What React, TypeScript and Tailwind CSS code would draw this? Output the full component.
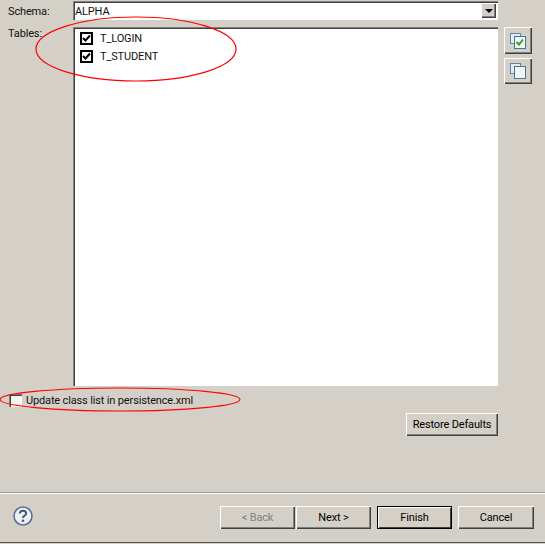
import type { ReactNode } from 'react'

const raised = 'shadow-[inset_1px_1px_0_#ffffff,inset_-1px_-1px_0_#404040,inset_-2px_-2px_0_#808080]'
const sunken = 'shadow-[inset_1px_1px_0_#808080,inset_2px_2px_0_#404040,inset_-1px_-1px_0_#ffffff]'

function Check() {
  return (
    <span className="flex h-[13px] w-[13px] items-center justify-center border-2 border-black bg-white">
      <svg width="9" height="9" viewBox="0 0 9 9">
        <path d="M1 4 L3.5 6.5 L8 1.5" fill="none" stroke="#000" strokeWidth="2" />
      </svg>
    </span>
  )
}

function WizardButton({ children, disabled, primary, className = '' }: { children: ReactNode; disabled?: boolean; primary?: boolean; className?: string }) {
  return (
    <button
      className={`flex h-[23px] items-center justify-center bg-[#d4d0c8] pt-[2px] ${primary ? 'border border-black shadow-[inset_1px_1px_0_#ffffff,inset_-1px_-1px_0_#404040]' : raised} ${disabled ? 'text-[#808080]' : 'text-black'} ${className}`}
    >
      {children}
    </button>
  )
}

function SquaresIcon({ checked }: { checked?: boolean }) {
  return (
    <svg width="16" height="16" viewBox="0 0 16 16">
      <rect x="0.5" y="0.5" width="10" height="10" fill="#e4ecf2" stroke="#5b87ab" />
      <rect x="4.5" y="3.5" width="11" height="12" fill="#f4f4f0" stroke="#3f77a3" />
      {checked && <path d="M6.5 9 L9 11.5 L13 6.5" fill="none" stroke="#2aa52a" strokeWidth="2" />}
    </svg>
  )
}

export default function App() {
  return (
    <div className="relative flex h-[544px] w-[545px] flex-col overflow-hidden bg-[#d4d0c8] font-['Roboto',sans-serif] text-[11px] tracking-[-0.15px] text-[#111111]">
      {/* Schema */}
      <div className="flex pt-px pl-2">
        <div className="w-[65px] pt-[4px] leading-[14px]">Schema:</div>
        <div className={`flex h-[19px] w-[425px] items-center justify-between bg-white pl-[2px] pr-[2px] ${sunken}`}>
          <span className="pt-[3px]">ALPHA</span>
          <span className={`flex h-[15px] w-[15px] items-center justify-center bg-[#d4d0c8] ${raised}`}>
            <span className="h-0 w-0 border-x-[4px] border-t-[4px] border-x-transparent border-t-black" />
          </span>
        </div>
      </div>

      {/* Tables */}
      <div className="mt-[7px] flex pl-2">
        <div className="w-[65px] leading-[14px]">Tables:</div>
        <div className={`flex h-[359px] w-[425px] flex-col gap-[5px] bg-white pt-[5px] pl-[7px] ${sunken}`}>
          <label className="flex h-[13px] items-center gap-[7px]"><Check /><span className="pt-[2px]">T_LOGIN</span></label>
          <label className="flex h-[13px] items-center gap-[7px]"><Check /><span className="pt-[2px]">T_STUDENT</span></label>
        </div>
        <div className="ml-[6px] flex flex-col gap-[4px]">
          <button className={`flex h-[27px] w-[28px] items-center justify-center ${raised}`}><SquaresIcon checked /></button>
          <button className={`flex h-[26px] w-[28px] items-center justify-center ${raised}`}><SquaresIcon /></button>
        </div>
      </div>

      {/* Update class list */}
      <label className="mt-[7px] flex h-[14px] items-center pl-[9px]">
        <span className="h-[13px] w-[13px] bg-[#f4f3ef] shadow-[inset_1px_1px_0_#808080,inset_2px_2px_0_#404040,inset_-1px_-1px_0_#ffffff]" />
        <span className="ml-1 pt-[2px]">Update class list in persistence.xml</span>
      </label>

      <div className="mt-[6px] flex justify-end pr-[47px]">
        <WizardButton className="w-[92px]">Restore Defaults</WizardButton>
      </div>

      {/* Footer */}
      <div className="mt-[56px] h-[2px] border-t border-b border-t-[#9a9892] border-b-white" />
      <div className="flex flex-1 items-start pt-[12px] pr-[11px] pl-[13px]">
        <svg width="20" height="20" viewBox="0 0 20 20">
          <circle cx="10" cy="10" r="9" fill="#eef1f6" stroke="#5a6f96" strokeWidth="1.6" />
          <path d="M6.8 7.6 C6.8 3.8 13.2 3.8 13.2 7.6 C13.2 9.8 10 9.6 10 12" fill="none" stroke="#46597f" strokeWidth="2" />
          <circle cx="10" cy="14.8" r="1.3" fill="#46597f" />
        </svg>
        <div className="ml-auto flex">
          <WizardButton disabled className="w-[75px]">&lt; Back</WizardButton>
          <WizardButton className="ml-px w-[75px]">Next &gt;</WizardButton>
          <WizardButton primary className="ml-[6px] w-[75px]">Finish</WizardButton>
          <WizardButton className="ml-[6px] w-[76px]">Cancel</WizardButton>
        </div>
      </div>
      <div className="h-[2px] border-t border-t-[#555555] bg-[#d4d0c8]" />

      {/* hand-drawn red annotations */}
      <svg className="pointer-events-none absolute top-0 left-0" width="545" height="544">
        <ellipse cx="136" cy="49" rx="100" ry="32" fill="none" stroke="#ff0000" strokeWidth="1.2" />
        <ellipse cx="120" cy="399.5" rx="120" ry="11.5" fill="none" stroke="#ff0000" strokeWidth="1.2" />
      </svg>
    </div>
  )
}
